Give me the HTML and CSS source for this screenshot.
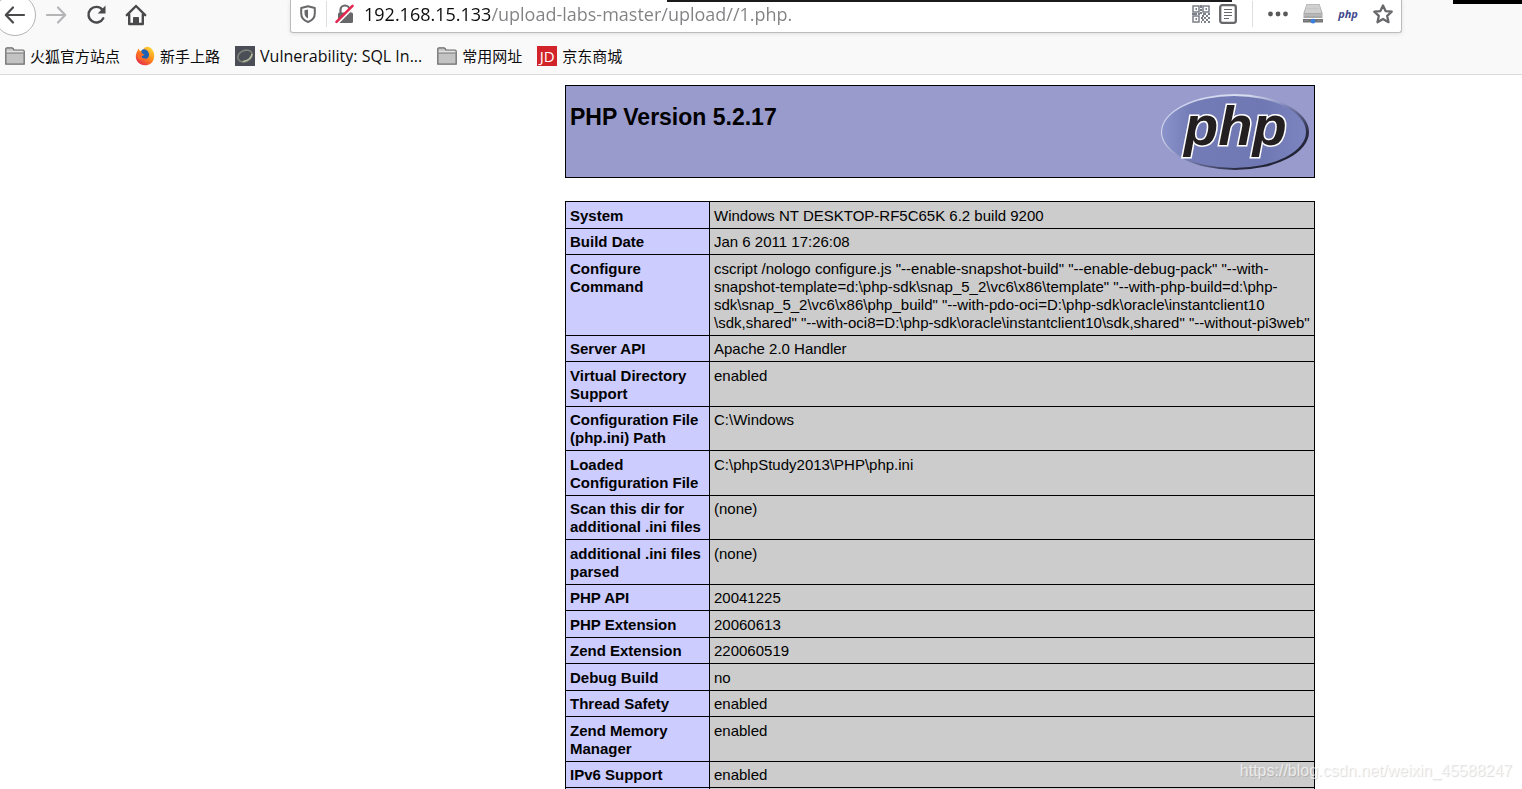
FILE: index.html
```html
<!DOCTYPE html>
<html lang="zh-CN">
<head>
<meta charset="utf-8">
<title>phpinfo()</title>
<link rel="stylesheet" href="styles.css">
</head>
<body>
<header class="chrome">
  <div class="toolbar">
    <nav class="nav-buttons">
      <button class="back" aria-label="Back">
        <svg width="22" height="20" viewBox="0 0 22 20" fill="none" stroke="#4a4a4d" stroke-width="2.2" stroke-linecap="round" stroke-linejoin="round"><path d="M20 10H2M9 2.5L1.8 10 9 17.5"/></svg>
      </button>
      <button class="tool" aria-label="Forward">
        <svg width="22" height="20" viewBox="0 0 22 20" fill="none" stroke="#b5b5b7" stroke-width="2.2" stroke-linecap="round" stroke-linejoin="round"><path d="M2 10H20M13 2.5L20.2 10 13 17.5"/></svg>
      </button>
      <button class="tool" aria-label="Reload">
        <svg width="22" height="20" viewBox="0 0 22 20" fill="none" stroke="#4a4a4d" stroke-width="2.4" stroke-linecap="round"><path d="M18.300 13.2A7.800 7.800 0 1 1 17.300 4.600"/><path d="M20.500 .6V8.400H12.700Z" fill="#4a4a4d" stroke="none"/></svg>
      </button>
      <button class="tool" aria-label="Home">
        <svg width="22" height="22" viewBox="0 0 22 22" fill="none" stroke="#4a4a4d" stroke-width="2.4" stroke-linecap="round" stroke-linejoin="round"><path d="M1.8 11.2L11 2l9.200 9.200M4.200 10.500V20H17.800V10.500"/><path d="M8.500 20V13.500h5V20Z" fill="#4a4a4d" stroke-width="1"/></svg>
      </button>
    </nav>
    <div class="urlbar">
      <svg width="16" height="18" viewBox="0 0 16 18" role="img" aria-label="Tracking protection"><path d="M8 1.200L14.800 3V8.200C14.800 12.500 12 15.600 8 17 4 15.600 1.200 12.500 1.200 8.200V3Z" fill="none" stroke="#68686b" stroke-width="2" stroke-linejoin="round"/><path d="M8 4.500V13.500C5.600 12.400 4.500 10.500 4.500 8V5.300Z" fill="#68686b"/></svg>
      <span class="divider"></span>
      <svg width="20" height="20" viewBox="0 0 20 20" role="img" aria-label="Connection not secure"><path d="M5.500 9V6a4.500 4.500 0 0 1 9 0V9" fill="none" stroke="#68686b" stroke-width="2.200"/><rect x="3" y="8.500" width="15" height="10.500" rx="1.500" fill="#68686b"/><path d="M2.300 19.300L18.500 3" stroke="#fff" stroke-width="2.500"/><path d="M1.500 17.800L17.500 1.800" stroke="#e22850" stroke-width="2.600" stroke-linecap="round"/></svg>
      <input class="address" type="text" aria-label="Address" value="192.168.15.133/upload-labs-master/upload//1.php.">
      <div class="page-actions">
        <div class="page-tools">
          <button aria-label="QR code">
            <svg width="18" height="18" viewBox="0 0 18 18" fill="none" stroke="#7b8088" stroke-width="1.500"><path d="M1 1H7V7H1ZM11 1H17V7H11ZM1 11H7V17H1Z"/><path d="M3.500 4H5M13.500 4H15M3.500 14H5" stroke-width="2"/><path d="M9 0V3M8 5H10M9 7V9M0 9H5M6 9H8M11 9H14M16 9H18M10 11H12M14 11H16M9 13H11M12 13H14M16 13H18M10 15H12M14 15H16M9 17H10M12 17H14M16 17H18" stroke-width="2"/></svg>
          </button>
          <button aria-label="Reader view">
            <svg width="18" height="20" viewBox="0 0 18 20" fill="none" stroke="#68686b"><rect x="1.200" y="1.200" width="15.600" height="17.600" rx="2" stroke-width="2.300"/><path d="M5 5.500H13M5 8.500H13M5 11.500H13M5 14.500H10" stroke-width="1.200"/></svg>
          </button>
        </div>
        <span class="rule"></span>
        <button aria-label="Page actions">
          <svg width="20" height="6" viewBox="0 0 20 6" fill="#59595c"><circle cx="2.500" cy="3" r="2.400"/><circle cx="10" cy="3" r="2.400"/><circle cx="17.500" cy="3" r="2.400"/></svg>
        </button>
        <button aria-label="Proxy server">
          <svg width="20" height="20" viewBox="0 0 20 20"><path d="M3.500 0H16.500L19.500 9V14H.5V9Z" fill="#a9a9a9"/><path d="M3.800 .5H16.200L18.500 9H1.500Z" fill="#d0d0d0"/><path d="M1 11H19M4 4.500H16" stroke="#c6c6c6"/><path d="M0 15H20V18.500H0Z" fill="#747478"/><path d="M1 16.500H6M14 16.500H19" stroke="#888"/><circle cx="10" cy="17.200" r="2.400" fill="#3c7de0"/></svg>
        </button>
        <button class="php-action">php</button>
        <button aria-label="Bookmark this page">
          <svg width="20" height="20" viewBox="0 0 20 20"><path d="M10 1.500L12.600 7.100 18.700 7.700 14.200 11.900 15.500 18.200 10 15 4.500 18.200 5.800 11.900 1.300 7.700 7.400 7.100Z" fill="none" stroke="#68686b" stroke-width="2.300" stroke-linejoin="round"/></svg>
        </button>
      </div>
    </div>
  </div>
  <nav class="bookmarks">
    <a href="#"><svg width="20" height="18" viewBox="0 0 20 18"><path d="M.8 15.500V2Q.8 .8 2 .8H7Q8 .8 8.500 2L9 3.200H18Q19.200 3.200 19.200 4.500V17.200H.8Z" fill="#c3c3c3" stroke="#6d6d6d" stroke-width="1.300"/><path d="M1.500 6H18.500" stroke="#777"/><path d="M1.600 4.500H18.400" stroke="#e3e3e3" stroke-width="1.500"/></svg><span>火狐官方站点</span></a>
    <a href="#"><svg width="20" height="20" viewBox="0 0 20 20"><defs><linearGradient id="fox" x1=".9" y1="0" x2=".2" y2="1"><stop offset="0" stop-color="#ffe53b"/><stop offset=".5" stop-color="#ff8a1c"/><stop offset="1" stop-color="#e3214d"/></linearGradient></defs><path d="M3.500 2.500L5 5 8 4C9 1 12 0 14 1 18 3 20 7 19 12 18 17 14 19.500 10 19.300 4.500 19 .5 15 .8 10 1 7 2.300 5.500 3.500 2.500Z" fill="url(#fox)"/><path d="M6.500 4.500C8 2.500 11 3 13 5.500 15 8.500 14 12.500 10.500 13 7.500 13.500 5.500 11.500 6 10L9.500 9 6.500 7Z" fill="#1f62b5"/><path d="M2 5.500L6.500 7 8.500 9 6.500 10.500C7 12.500 9 13 11 12 8.500 15.500 3 14 2 10Z" fill="#ff6b24"/></svg><span>新手上路</span></a>
    <a href="#"><svg width="20" height="20" viewBox="0 0 20 20"><path d="M0 0H20V20H0Z" fill="#4b4e56"/><ellipse cx="10" cy="10" rx="7.500" ry="5.500" transform="rotate(-25 10 10)" fill="none" stroke="#7c8378" stroke-width="1.600"/><path d="M8 15.500Q16 14 17 8" fill="none" stroke="#bfc4a4" stroke-width="1.500"/></svg><span class="latin">Vulnerability: SQL In...</span></a>
    <a href="#"><svg width="20" height="18" viewBox="0 0 20 18"><path d="M.8 15.500V2Q.8 .8 2 .8H7Q8 .8 8.500 2L9 3.200H18Q19.200 3.200 19.200 4.500V17.200H.8Z" fill="#c3c3c3" stroke="#6d6d6d" stroke-width="1.300"/><path d="M1.500 6H18.500" stroke="#777"/><path d="M1.600 4.500H18.400" stroke="#e3e3e3" stroke-width="1.500"/></svg><span>常用网址</span></a>
    <a href="#"><span class="jd">JD</span><span>京东商城</span></a>
  </nav>
  <div class="edge edge-mid"></div>
  <div class="edge edge-right"></div>
</header>
<main class="page">
  <section class="banner">
    <h1>PHP Version 5.2.17</h1>
    <svg class="logo" width="150" height="84" viewBox="0 0 150 84" role="img" aria-label="PHP logo">
      <defs>
        <linearGradient id="rim" x1="0" y1="0" x2="1" y2="1"><stop offset="0" stop-color="#c9cfec"/><stop offset=".3" stop-color="#d9def0"/><stop offset=".5" stop-color="#7f86b8"/><stop offset=".75" stop-color="#292b43"/><stop offset="1" stop-color="#15151f"/></linearGradient>
        <linearGradient id="face" x1="0" y1="0" x2="1" y2="0"><stop offset="0" stop-color="#8b93cb"/><stop offset=".2" stop-color="#737cb6"/><stop offset=".7" stop-color="#6f78b3"/><stop offset="1" stop-color="#7c85c0"/></linearGradient>
      </defs>
      <ellipse cx="75" cy="42" rx="74" ry="38" fill="url(#rim)"/>
      <ellipse cx="74" cy="42" rx="72" ry="36" fill="url(#face)"/>
      <text x="24" y="55" class="logo-text">php</text>
    </svg>
  </section>
  <table class="info">
    <tbody>
      <tr><th scope="row">System</th><td>Windows NT DESKTOP-RF5C65K 6.2 build 9200</td></tr>
      <tr><th scope="row">Build Date</th><td>Jan 6 2011 17:26:08</td></tr>
      <tr><th scope="row">Configure<br>Command</th><td>cscript /nologo configure.js "--enable-snapshot-build" "--enable-debug-pack" "--with-<br>snapshot-template=d:\php-sdk\snap_5_2\vc6\x86\template" "--with-php-build=d:\php-<br>sdk\snap_5_2\vc6\x86\php_build" "--with-pdo-oci=D:\php-sdk\oracle\instantclient10<br>\sdk,shared" "--with-oci8=D:\php-sdk\oracle\instantclient10\sdk,shared" "--without-pi3web"</td></tr>
      <tr><th scope="row">Server API</th><td>Apache 2.0 Handler</td></tr>
      <tr><th scope="row">Virtual Directory Support</th><td>enabled</td></tr>
      <tr><th scope="row">Configuration File (php.ini) Path</th><td>C:\Windows</td></tr>
      <tr><th scope="row">Loaded Configuration File</th><td>C:\phpStudy2013\PHP\php.ini</td></tr>
      <tr><th scope="row">Scan this dir for additional .ini files</th><td>(none)</td></tr>
      <tr><th scope="row">additional .ini files parsed</th><td>(none)</td></tr>
      <tr><th scope="row">PHP API</th><td>20041225</td></tr>
      <tr><th scope="row">PHP Extension</th><td>20060613</td></tr>
      <tr><th scope="row">Zend Extension</th><td>220060519</td></tr>
      <tr><th scope="row">Debug Build</th><td>no</td></tr>
      <tr><th scope="row">Thread Safety</th><td>enabled</td></tr>
      <tr><th scope="row">Zend Memory Manager</th><td>enabled</td></tr>
      <tr><th scope="row">IPv6 Support</th><td>enabled</td></tr>
      <tr><th scope="row"></th><td></td></tr>
    </tbody>
  </table>
</main>
<div class="watermark">https://blog.csdn.net/weixin_45588247</div>
</body>
</html>
```
FILE: styles.css
```css
* {
  box-sizing: border-box;
}

body {
  margin: 0;
  height: 100vh;
  overflow: hidden;
  position: relative;
  background: #fff;
  color: #000;
  font-family: "Liberation Sans", Arial, sans-serif;
}

button {
  border: 0;
  padding: 0;
  background: none;
  display: flex;
  align-items: center;
  justify-content: center;
}

svg {
  flex: none;
  display: block;
}

.chrome {
  position: relative;
  background: #f9f9fa;
  border-bottom: 1px solid #dcdcdc;
}

.toolbar {
  display: flex;
  align-items: flex-start;
  height: 38px;
  padding-right: 120px;
}

.nav-buttons {
  display: flex;
  width: 290px;
  flex: none;
}

.back {
  width: 42px;
  height: 42px;
  margin: -6px 0 0 -6px;
  border: 1px solid #b4b4b4;
  border-radius: 50%;
  background: #fff;
}

.tool {
  width: 40px;
  height: 29px;
}

.urlbar {
  flex: 1;
  display: flex;
  align-items: center;
  height: 33px;
  padding: 0 8px 4px 9px;
  background: #fff;
  border: 1px solid #bcbcbc;
  border-top: 0;
  border-radius: 0 0 3px 3px;
  box-shadow: 0 1px 4px rgba(0, 0, 0, 0.1);
}

.divider {
  width: 1px;
  height: 26px;
  margin: 0 8px 0 10px;
  background: #dedede;
}

.address {
  flex: 1;
  min-width: 0;
  border: 0;
  outline: 0;
  padding: 0;
  margin-left: 9px;
  height: 28px;
  font: 18px "Open Sans", "Noto Sans", sans-serif;
  color: transparent;
  background: linear-gradient(to right, #0c0c0d 127px, #818184 127px);
  -webkit-background-clip: text;
  background-clip: text;
}

.page-actions {
  display: flex;
  align-items: center;
  gap: 15px;
}

.page-tools {
  display: flex;
  align-items: center;
  gap: 9px;
}

.rule {
  width: 1px;
  height: 26px;
  background: #dedede;
}

.page-actions .php-action {
  width: 20px;
  font: italic bold 11px/16px "Open Sans", sans-serif;
  color: #404a8e;
}

.bookmarks {
  display: flex;
  align-items: center;
  gap: 15px;
  height: 36px;
  padding: 0 5px;
}

.bookmarks a {
  display: flex;
  align-items: center;
  gap: 5px;
  color: #0c0c0d;
  text-decoration: none;
  font: 15px/20px "Noto Sans CJK SC", sans-serif;
}

.bookmarks .latin {
  font-family: "Open Sans", "Noto Sans", sans-serif;
  font-size: 16px;
}

.jd {
  width: 20px;
  height: 20px;
  background: #d2232a;
  color: #fff;
  font: 15px/20px "Open Sans", sans-serif;
  text-align: center;
}

.edge {
  position: absolute;
  top: 0;
  background: #1b1b1d;
}

.edge-mid {
  left: 667px;
  width: 565px;
  height: 2px;
}

.edge-right {
  left: 1453px;
  right: 0;
  height: 4px;
  background: #000;
}

.page {
  padding: 10px 0 0 565px;
}

.banner {
  display: flex;
  align-items: flex-start;
  justify-content: space-between;
  width: 100%;
  max-width: 750px;
  height: 93px;
  padding: 4px;
  border: 1px solid #000;
  background: #999bcc;
}

.banner h1 {
  margin: 13px 0 0;
  font-size: 23px;
  line-height: 28px;
}

.logo-text {
  font: italic bold 56px "Liberation Sans", Arial, sans-serif;
  fill: #231f20;
  stroke: #fff;
  stroke-width: 3px;
  paint-order: stroke;
}

.info {
  width: 100%;
  max-width: 750px;
  margin-top: 23px;
  border-collapse: collapse;
  font-size: 15px;
  line-height: 18px;
}

.info th,
.info td {
  border: 1px solid #000;
  padding: 5px 4px 3px;
  text-align: left;
  vertical-align: top;
}

.info tr:nth-child(even) > * {
  padding-top: 4px;
}

.info th {
  width: 144px;
  background: #ccccff;
}

.info td {
  background: #cccccc;
}

.watermark {
  position: absolute;
  right: 10px;
  bottom: 8px;
  font-size: 16px;
  line-height: 20px;
  color: rgba(255, 255, 255, 0.7);
  text-shadow: 1px 1px 1px rgba(0, 0, 0, 0.15);
}
```
